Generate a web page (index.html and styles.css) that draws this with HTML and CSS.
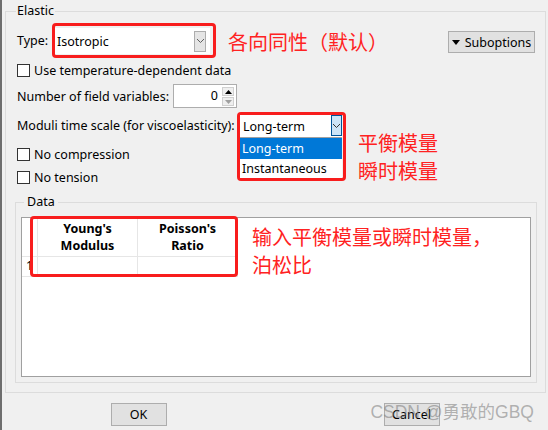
FILE: index.html
```html
<!DOCTYPE html>
<html lang="en">
<head>
<meta charset="utf-8">
<title>Edit Material - Elastic</title>
<link rel="stylesheet" href="styles.css">
</head>
<body>
<div class="strip"></div>
<main class="window">
  <fieldset class="group outer">
    <legend class="legend legend-outer">Elastic</legend>
    <div class="type-row">
      <span class="type-label">Type:</span>
      <div class="mark mark-type">
        <div class="combo combo-type">
          <span class="combo-text">Isotropic</span>
          <span class="dd"><svg width="9" height="6" viewBox="0 0 9 6"><path d="M1 1 L4.5 4.5 L8 1" fill="none" stroke="#606060" stroke-width="1"/></svg></span>
        </div>
      </div>
      <span class="note note-type">各向同性（默认）</span>
      <button class="btn btn-sub"><svg class="tri" width="8" height="5" viewBox="0 0 8 5"><polygon points="0,0 8,0 4,5" fill="#000"/></svg>Suboptions</button>
    </div>
    <div class="check-row first-check"><span class="box"></span><span>Use temperature-dependent data</span></div>
    <div class="num-row">
      <span class="num-label">Number of field variables:</span>
      <div class="spin">
        <span class="spin-val">0</span>
        <span class="spin-btns">
          <span class="spin-btn"><svg width="7" height="4" viewBox="0 0 7 4"><polygon points="0,4 7,4 3.5,0" fill="#000"/></svg></span>
          <span class="spin-btn"><svg width="7" height="4" viewBox="0 0 7 4"><polygon points="0,0 7,0 3.5,4" fill="#a0a0a0"/></svg></span>
        </span>
      </div>
    </div>
    <div class="moduli">
      <div class="mod-left">
        <div class="mod-label">Moduli time scale (for viscoelasticity):</div>
        <div class="check-row cr-comp"><span class="box"></span><span>No compression</span></div>
        <div class="check-row cr-tens"><span class="box"></span><span>No tension</span></div>
      </div>
      <div class="mark mark-mod">
        <div class="combo combo-mod">
          <span class="combo-text">Long-term</span>
          <span class="dd dd-active"><svg width="9" height="6" viewBox="0 0 9 6"><path d="M1 1 L4.5 4.5 L8 1" fill="none" stroke="#333" stroke-width="1"/></svg></span>
        </div>
        <ul class="list">
          <li class="item sel">Long-term</li>
          <li class="item">Instantaneous</li>
        </ul>
      </div>
      <div class="note note-mod"><div>平衡模量</div><div>瞬时模量</div></div>
    </div>
    <fieldset class="group data">
      <legend class="legend legend-data">Data</legend>
      <div class="table">
        <div class="grid">
          <div class="hcell corner"></div>
          <div class="hcell">Young's<br>Modulus</div>
          <div class="hcell">Poisson's<br>Ratio</div>
          <div class="cell rcell">1</div>
          <div class="cell"></div>
          <div class="cell"></div>
        </div>
        <div class="mark-table"></div>
        <div class="note note-table">输入平衡模量或瞬时模量，<br>泊松比</div>
      </div>
    </fieldset>
  </fieldset>
  <div class="buttons">
    <button class="btn btn-dlg">OK</button>
    <button class="btn btn-dlg">Cancel</button>
  </div>
  <div class="watermark">CSDN @勇敢的GBQ</div>
</main>
</body>
</html>
```

FILE: styles.css
```css
* { box-sizing: border-box; }
html, body { margin: 0; padding: 0; }
body {
  display: flex;
  width: 548px;
  height: 430px;
  overflow: hidden;
  background: #f0f0f0;
  font-family: "Noto Sans", "Noto Sans CJK SC", sans-serif;
  font-size: 12.5px;
  color: #000;
}
.strip { width: 2px; flex: none; background: #6e6e6e; }
.window { position: relative; flex: 1; display: flex; flex-direction: column; }

.group {
  margin: 0;
  min-width: 0;
  border: 1px solid #dcdcdc;
}
.legend { line-height: 16px; height: 16px; }
.outer { margin: 3px 2px 0 3px; padding: 0 10px 9px 11px; }
.legend-outer { margin-left: -1px; padding: 0 1px; }

.type-row { display: flex; align-items: flex-start; margin-top: 4px; height: 35px; }
.type-label { width: 35px; padding-top: 5px; line-height: 26px; }
.mark { border: 3px solid #f81d1d; border-radius: 4px; }
.mark-type { padding: 2px 3px 1px 0; }
.combo { display: flex; align-items: center; background: #fff; }
.combo-type { width: 155px; height: 26px; }
.combo-text { flex: 1; padding-left: 2px; white-space: nowrap; }
.dd {
  display: flex; align-items: center; justify-content: center;
  width: 12px; height: 21px; margin-right: 4px;
  background: #e5e5e5; border: 1px solid #adadad;
}
.note { color: #ff2222; font-family: "Noto Sans CJK SC", sans-serif; font-size: 20px; line-height: 28px; white-space: nowrap; }
.note-type { margin-left: 12px; margin-top: 5px; }
.btn {
  font: inherit; color: #000;
  background: #e1e1e1; border: 1px solid #adadad; border-radius: 0;
  padding: 0; display: flex; align-items: center; justify-content: center;
}
.btn-sub { margin-left: auto; margin-top: 8px; width: 87px; height: 22px; gap: 5px; }

.check-row { display: flex; align-items: center; gap: 4px; height: 18px; white-space: nowrap; }
.box { width: 13px; height: 13px; background: #fff; border: 1px solid #333; flex: none; }
.first-check { margin-top: 3px; }

.num-row { display: flex; align-items: center; margin-top: 5px; height: 24px; }
.num-label { width: 156px; white-space: nowrap; }
.spin { display: flex; width: 64px; height: 24px; background: #fff; border: 1px solid #adadad; }
.spin-val { flex: 1; text-align: right; padding-right: 4px; line-height: 22px; }
.spin-btns { display: flex; flex-direction: column; gap: 1px; width: 12px; margin: 2px 2px 0 0; }
.spin-btn {
  display: flex; align-items: center; justify-content: center;
  height: 9px; background: #efefef; border: 1px solid #d0d0d0;
}

.moduli { display: flex; align-items: flex-start; margin-top: 4px; }
.mod-left { width: 220px; }
.mod-label { margin-top: 5px; line-height: 18px; white-space: nowrap; }
.cr-comp { margin-top: 10px; }
.cr-tens { margin-top: 5px; }
.mark-mod { width: 109px; padding: 0 1px 0 0; }
.combo-mod { height: 22px; }
.combo-mod .combo-text { padding-left: 3px; }
.dd-active { width: 11px; height: 21px; margin-right: 0; background: #cce4f7; border-color: #005499; align-self: flex-start; }
.list { list-style: none; margin: 0; padding: 0; background: #fff; border-top: 1px solid #a0a0a0; }
.item { padding-left: 2px; height: 19px; line-height: 19px; white-space: nowrap; }
.item.sel { height: 21px; line-height: 21px; background: #0078d7; color: #fff; }
.note-mod { margin-left: 12px; margin-top: 17px; }

.data { margin: 8px -2px 0 -2px; padding: 0 5px 5px 5px; }
.legend-data { margin-left: 3px; padding: 0 3px; }
.table { position: relative; margin-top: 7px; height: 160px; background: #fff; border: 1px solid #a0a0a0; }
.grid { display: grid; grid-template-columns: 16px 100px 100px; grid-template-rows: 39px 20px; }
.hcell, .cell { border-right: 1px solid #e6e6e6; border-bottom: 1px solid #e6e6e6; }
.hcell {
  display: flex; align-items: center; justify-content: center; text-align: center;
  font-weight: 700; font-size: 12.5px; line-height: 17px;
}
.rcell { text-align: center; line-height: 18px; }
.mark-table {
  position: absolute; left: 8px; top: -2px; width: 208px; height: 61px;
  border: 3px solid #f81d1d; border-radius: 4px;
}
.note-table { position: absolute; left: 230px; top: 5px; }

.buttons { display: flex; justify-content: space-around; margin-top: 10px; }
.btn-dlg { width: 56px; height: 23px; }
.watermark {
  position: absolute; right: 14px; top: 398px;
  font-family: "Liberation Sans", "Noto Sans CJK SC", sans-serif; font-size: 17.5px; line-height: 28px;
  color: rgba(120, 120, 120, 0.55); white-space: nowrap;
}
```
